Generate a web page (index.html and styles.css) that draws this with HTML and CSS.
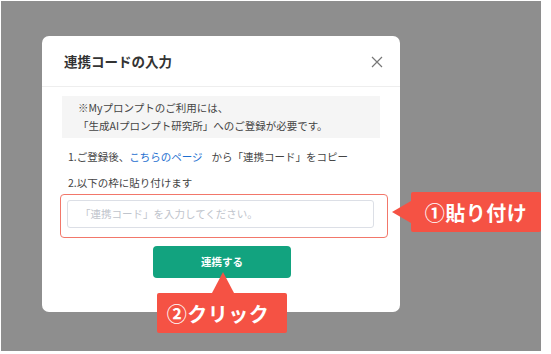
FILE: index.html
```html
<!DOCTYPE html>
<html lang="ja">
<head>
<meta charset="utf-8">
<link rel="stylesheet" href="styles.css">
</head>
<body>
<div class="backdrop">
  <div class="modal">
    <div class="modal-header">
      <h2 class="modal-title">連携コードの入力</h2>
      <svg class="close" width="12" height="12" viewBox="0 0 12 12"><path d="M1 1L11 11M11 1L1 11" stroke="#777" stroke-width="1.2" fill="none"/></svg>
    </div>
    <div class="modal-body">
      <div class="notice">※Myプロンプトのご利用には、<br>「生成AIプロンプト研究所」へのご登録が必要です。</div>
      <p class="step step1">1.ご登録後、<span class="link">こちらのページ</span>から「連携コード」をコピー</p>
      <p class="step step2">2.以下の枠に貼り付けます</p>
      <div class="highlight">
        <div class="input">「連携コード」を入力してください。</div>
      </div>
      <div class="actions"><button class="btn">連携する</button></div>
    </div>
  </div>
  <div class="callout callout-left">①貼り付け</div>
  <div class="callout callout-up">②クリック</div>
</div>
</body>
</html>
```
FILE: styles.css
```css
html, body { margin: 0; padding: 0; background: #fff; }
body { font-family: "Noto Sans CJK JP", "Noto Sans", sans-serif; }
.backdrop {
  position: relative;
  margin: 1px 0 0 1px;
  width: 540px;
  height: 350px;
  background: #8e8e8e;
  padding: 35px 0 0 41px;
  box-sizing: border-box;
}
.modal {
  width: 358px;
  height: 276px;
  background: #fff;
  border-radius: 7px;
  box-sizing: border-box;
}
.modal-header {
  height: 51px;
  display: flex;
  align-items: center;
  justify-content: space-between;
  padding: 0 17px 0 22px;
  border-bottom: 1px solid #eeeeee;
  box-sizing: border-box;
}
.modal-title {
  margin: 0;
  font-size: 13.5px;
  font-weight: 700;
  color: #333;
  line-height: 1;
  padding-top: 2px;
}
.close { display: block; margin-top: 2px; }
.modal-body { padding: 9px 20px 0 20px; }
.notice {
  background: #f5f5f5;
  height: 42px;
  box-sizing: border-box;
  padding: 3px 0 0 16px;
  font-size: 10.5px;
  line-height: 18px;
  color: #444;
}
.step {
  margin: 0;
  font-size: 10.5px;
  color: #444;
  line-height: 16px;
  padding-left: 6px;
}
.step1 { margin-top: 11px; }
.step2 { margin-top: 10px; }
.link { color: #1e6fd0; margin-right: 9px; }
.highlight {
  margin: 3px 0 0 -2px;
  width: 328px;
  height: 44px;
  box-sizing: border-box;
  border: 1px solid #f2776a;
  border-radius: 4px;
  padding: 5px 13px 0 6px;
}
.input {
  height: 28px;
  box-sizing: border-box;
  border: 1px solid #dcdfe6;
  border-radius: 3px;
  font-size: 10.5px;
  color: #c0c4cc;
  line-height: 26px;
  padding-left: 12px;
}
.actions { display: flex; justify-content: center; margin-top: 8px; padding-left: 2px; }
.btn {
  width: 138px;
  height: 32px;
  border: none;
  border-radius: 4px;
  background: #12a37f;
  color: #fff;
  font-family: inherit;
  font-size: 10.5px;
  font-weight: 700;
  padding: 0 0 2px 0;
}
.callout {
  position: absolute;
  background: #f55244;
  color: #fff;
  font-size: 20px;
  font-weight: 700;
  width: 130px;
  height: 40px;
  display: flex;
  align-items: center;
  justify-content: center;
  border-radius: 2px;
  letter-spacing: 0.5px;
}
.callout-left { left: 410px; top: 191px; }
.callout-left::before {
  content: "";
  position: absolute;
  left: -19px;
  top: 9px;
  border-style: solid;
  border-width: 11px 19px 11px 0;
  border-color: transparent #f55244 transparent transparent;
}
.callout-up { left: 156px; top: 292px; padding-right: 8px; box-sizing: border-box; }
.callout-up::before {
  content: "";
  position: absolute;
  left: 55px;
  top: -21px;
  border-style: solid;
  border-width: 0 11px 21px 11px;
  border-color: transparent transparent #f55244 transparent;
}
```
